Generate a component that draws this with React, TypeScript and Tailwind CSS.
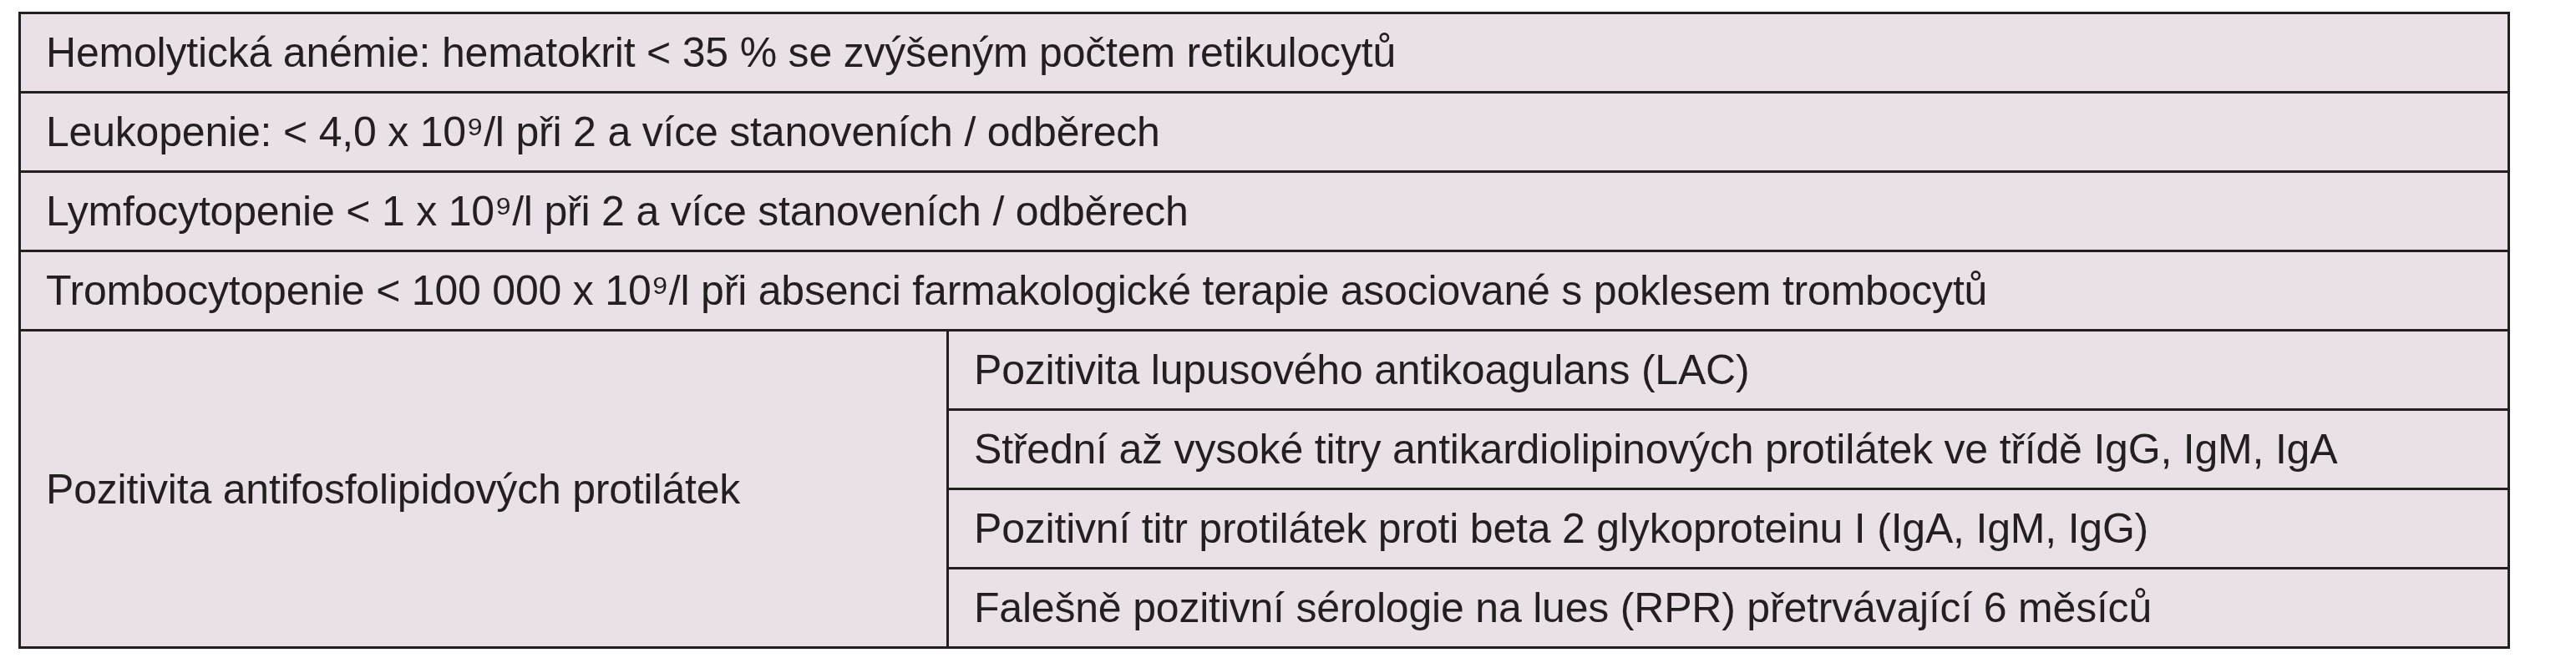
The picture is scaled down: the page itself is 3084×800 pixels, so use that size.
import React from 'react'

const rows = [
  'Hemolytická anémie: hematokrit < 35 % se zvýšeným počtem retikulocytů',
  'Leukopenie: < 4,0 x 10⁹/l při 2 a více stanoveních / odběrech',
  'Lymfocytopenie < 1 x 10⁹/l při 2 a více stanoveních / odběrech',
  'Trombocytopenie < 100 000 x 10⁹/l při absenci farmakologické terapie asociované s poklesem trombocytů',
]

const antiphospholipid = [
  'Pozitivita lupusového antikoagulans (LAC)',
  'Střední až vysoké titry antikardiolipinových protilátek ve třídě IgG, IgM, IgA',
  'Pozitivní titr protilátek proti beta 2 glykoproteinu I (IgA, IgM, IgG)',
  'Falešně pozitivní sérologie na lues (RPR) přetrvávající 6 měsíců',
]

const cell = 'h-[95px] border-[3px] border-[#231f20] pl-[30px] pr-4 align-middle text-left'

export default function App() {
  return (
    <div className="min-h-[800px] w-[3084px] bg-white pl-[22px] pt-[14px]">
      <table className="w-[2983px] table-fixed border-collapse border-[3px] border-[#231f20] bg-[#e9e0e8] font-['Liberation_Sans',Arial,sans-serif] text-[50px] leading-none tracking-[-0.2px] text-[#231f20]">
        <colgroup>
          <col className="w-[1111px]" />
          <col />
        </colgroup>
        <tbody>
          {rows.map((text) => (
            <tr key={text}>
              <td colSpan={2} className={cell}>
                {text}
              </td>
            </tr>
          ))}
          {antiphospholipid.map((text, i) => (
            <tr key={text}>
              {i === 0 && (
                <td rowSpan={4} className={cell}>
                  Pozitivita antifosfolipidových protilátek
                </td>
              )}
              <td className={cell}>{text}</td>
            </tr>
          ))}
        </tbody>
      </table>
    </div>
  )
}
